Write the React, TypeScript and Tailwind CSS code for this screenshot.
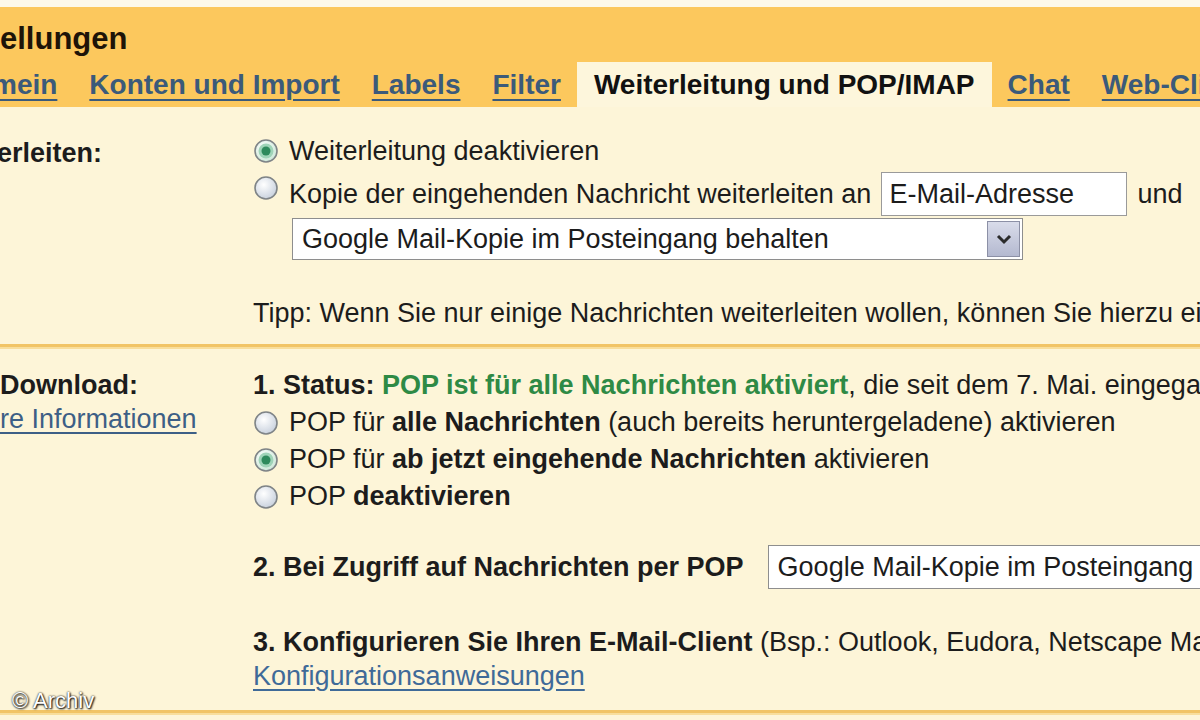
import React from 'react';

function Radio({ checked }: { checked?: boolean }) {
    return (
        <svg width="26" height="26" viewBox="0 0 26 26" className="shrink-0">
            <defs>
                <radialGradient id={checked ? 'rgOn' : 'rgOff'} cx="40%" cy="35%" r="70%">
                    <stop offset="0%" stopColor="#ffffff" />
                    <stop offset="100%" stopColor={checked ? '#c9e6d6' : '#c6cfdc'} />
                </radialGradient>
            </defs>
            <circle cx="13" cy="13" r="11" fill={`url(#${checked ? 'rgOn' : 'rgOff'})`} stroke="#7f8487" strokeWidth="1.6" />
            {checked && (
                <>
                    <circle cx="13" cy="13" r="7.5" fill="#9fd4b8" />
                    <circle cx="13" cy="13" r="4.5" fill="#2e8a5c" />
                </>
            )}
        </svg>
    );
}

function SelectBox({ label, className }: { label: string; className: string }) {
    return (
        <div className={`flex items-center bg-white border border-[#8e8e8e] ${className}`}>
            <span className="flex-1 pl-[9px] whitespace-nowrap overflow-hidden">{label}</span>
            <div className="w-[33px] h-[36px] mr-[2px] flex items-center justify-center bg-gradient-to-b from-[#d9dcea] to-[#b4b9d0] border border-[#8c90a6]">
                <svg width="16" height="12" viewBox="0 0 16 12">
                    <path d="M2 3 L8 9 L14 3" fill="none" stroke="#2b2b2b" strokeWidth="3" />
                </svg>
            </div>
        </div>
    );
}

const tabLink = 'text-[#3b5a7a] underline decoration-2 underline-offset-[5px] px-[16px]';

export default function App() {
    return (
        <div className="relative w-[1200px] h-[720px] overflow-hidden bg-[#fdf5d8] text-[#1c1c1c] font-['Liberation_Sans',Arial,sans-serif]">
            <div className="h-[7px] bg-[#fdf9ea]" />

            <div className="bg-[#fcc85d]">
                <div className="h-[55px] pt-[14px] text-[31px] font-bold leading-[36px] text-[#1e1408] whitespace-nowrap">
                    ellungen
                </div>
                <div className="flex items-stretch h-[45px] text-[28px] font-bold leading-[45px] whitespace-nowrap">
                    <span className="text-[#3b5a7a] underline decoration-2 underline-offset-[5px] pr-[16px] -ml-[8px]">mein</span>
                    <span className={tabLink}>Konten und Import</span>
                    <span className={tabLink}>Labels</span>
                    <span className={tabLink}>Filter</span>
                    <span className="bg-[#fdf6dc] text-[#111] px-[17px]">Weiterleitung und POP/IMAP</span>
                    <span className={tabLink}>Chat</span>
                    <span className={tabLink}>Web-Clips</span>
                </div>
            </div>

            <div className="text-[27px] whitespace-nowrap">
                {/* Weiterleitung */}
                <div className="flex pt-[25px] pb-[12px]">
                    <div className="w-[253px] shrink-0 font-bold leading-[38px] pt-[2px] -ml-[3px]">erleiten:</div>
                    <div className="flex flex-col -mr-[3px]">
                        <div className="flex items-center h-[38px] gap-[10px] ml-[3px]">
                            <Radio checked />
                            <span>Weiterleitung deaktivieren</span>
                        </div>
                        <div className="flex items-center h-[48px] gap-[10px] ml-[3px]">
                            <div className="self-start mt-[5px]"><Radio /></div>
                            <span>Kopie der eingehenden Nachricht weiterleiten an</span>
                            <div className="w-[246px] h-[44px] bg-white border border-[#9a9a9a] pl-[7px] leading-[42px]">E-Mail-Adresse</div>
                            <span>und</span>
                        </div>
                        <SelectBox label="Google Mail-Kopie im Posteingang behalten" className="ml-[42px] w-[731px] h-[42px]" />
                        <div className="mt-[34px] leading-[38px] ml-[3px]">
                            Tipp: Wenn Sie nur einige Nachrichten weiterleiten wollen, können Sie hierzu einen Filter erstellen.
                        </div>
                    </div>
                </div>

                <div className="h-[3px] bg-[#f1c466] border-b-[2px] border-[#f8de9c] box-content" />

                {/* POP */}
                <div className="flex pt-[17px] pb-[17px]">
                    <div className="w-[253px] shrink-0 flex flex-col">
                        <span className="font-bold leading-[38px]">Download:</span>
                        <span className="text-[#3d5f86] underline underline-offset-[4px] leading-[30px]">re Informationen</span>
                    </div>
                    <div className="flex flex-col">
                        <div className="leading-[38px]">
                            <span className="font-bold">1. Status: </span>
                            <span className="font-bold text-[#2e8a45]">POP ist für alle Nachrichten aktiviert</span>
                            <span>, die seit dem 7. Mai. eingegangen sind</span>
                        </div>
                        <div className="flex items-center h-[37px] gap-[10px]">
                            <Radio />
                            <span>POP für <b>alle Nachrichten</b> (auch bereits heruntergeladene) aktivieren</span>
                        </div>
                        <div className="flex items-center h-[37px] gap-[10px]">
                            <Radio checked />
                            <span>POP für <b>ab jetzt eingehende Nachrichten</b> aktivieren</span>
                        </div>
                        <div className="flex items-center h-[37px] gap-[10px]">
                            <Radio />
                            <span>POP <b>deaktivieren</b></span>
                        </div>
                        <div className="flex items-center mt-[30px] h-[44px] gap-[24px]">
                            <span className="font-bold">2. Bei Zugriff auf Nachrichten per POP</span>
                            <SelectBox label="Google Mail-Kopie im Posteingang behalten" className="w-[731px] h-[44px]" />
                        </div>
                        <div className="mt-[36px] leading-[34px]">
                            <span className="font-bold">3. Konfigurieren Sie Ihren E-Mail-Client</span> (Bsp.: Outlook, Eudora, Netscape Mail)
                        </div>
                        <div className="leading-[34px]">
                            <span className="text-[#3f6a98] underline underline-offset-[4px]">Konfigurationsanweisungen</span>
                        </div>
                    </div>
                </div>

                <div className="h-[3px] bg-[#f1c466] border-b-[2px] border-[#f8de9c] box-content" />
            </div>

            <div className="absolute left-[12px] top-[684px] text-[22px] text-white [text-shadow:0_0_2px_#000,1px_1px_2px_#000]">
                © Archiv
            </div>
        </div>
    );
}
